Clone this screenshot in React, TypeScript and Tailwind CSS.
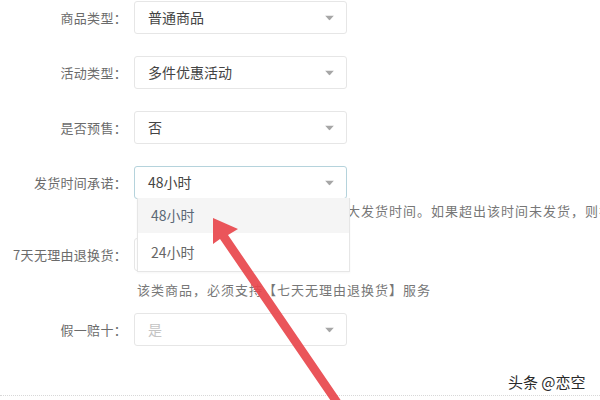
import React from 'react';

const Caret = () => (
  <svg width="9" height="5" viewBox="0 0 9 5" className="absolute right-[12px] top-1/2 -translate-y-1/2">
    <path d="M0 0 L9 0 L4.5 5 Z" fill="#a6a6a6" />
  </svg>
);

const Select: React.FC<{ value: string; focused?: boolean; muted?: boolean }> = ({ value, focused, muted }) => (
  <div
    className={`relative flex items-center w-[213px] h-[33px] pl-[13px] rounded-[3px] border bg-white text-[14px] ${
      focused ? 'border-[#b5d3dc]' : 'border-[#e6e6e6]'
    } ${muted ? 'text-[#c4c4c4]' : 'text-[#444]'}`}
  >
    {value}
    <Caret />
  </div>
);

const Row: React.FC<{ label: string; children: React.ReactNode; className?: string }> = ({ label, children, className }) => (
  <div className={`flex items-center ${className ?? ''}`}>
    <div className="w-[130px] pr-[3px] text-right text-[13px] tracking-[0.3px] text-[#6b6b6b] whitespace-nowrap">{label}</div>
    <div className="ml-[4px]">{children}</div>
  </div>
);

export default function App() {
  return (
    <div
      className="relative w-[600px] h-[400px] overflow-hidden bg-white"
      style={{ fontFamily: '"Noto Sans CJK SC", "Noto Sans", sans-serif' }}
    >
      <div className="pt-[1px]">
        <Row label="商品类型：">
          <Select value="普通商品" />
        </Row>
        <Row label="活动类型：" className="mt-[22px]">
          <Select value="多件优惠活动" />
        </Row>
        <Row label="是否预售：" className="mt-[22px]">
          <Select value="否" />
        </Row>
        <Row label="发货时间承诺：" className="mt-[22px]">
          <Select value="48小时" focused />
        </Row>
        {/* hint partly hidden by the open dropdown */}
        <div className="mt-[4px] ml-[137px] h-[16px] leading-[16px] text-[13px] text-[#777] whitespace-nowrap tracking-[1px]">
          此处选择的时间为卖家所承诺的最大发货时间。如果超出该时间未发货，则视为违约
        </div>
        <Row label="7天无理由退换货：" className="mt-[19px]">
          <Select value="是" />
        </Row>
        <div className="mt-[11px] ml-[137px] h-[16px] leading-[16px] text-[13px] text-[#777] whitespace-nowrap tracking-[1px]">
          该类商品，必须支持【七天无理由退换货】服务
        </div>
        <Row label="假一赔十：" className="mt-[15px]">
          <Select value="是" muted />
        </Row>
      </div>

      {/* open dropdown */}
      <div className="absolute left-[137px] top-[198px] w-[213px] border border-t-0 border-[#e6e6e6] bg-white text-[14px] shadow-[0_1px_2px_rgba(0,0,0,0.04)]">
        <div className="h-[35px] flex items-center pl-[13px] bg-[#f5f5f5] text-[#5b6876]">48小时</div>
        <div className="h-[38px] flex items-center pl-[13px] text-[#666]">24小时</div>
      </div>

      {/* dotted rule */}
      <div className="absolute left-0 right-0 top-[395px] border-t border-dotted border-[#d8d8d8]" />

      {/* red arrow */}
      <svg className="absolute left-0 top-0" width="600" height="400" viewBox="0 0 600 400">
        <polygon
          points="213,218 238,229 228,235 342,402 333,404 220,239 213,244"
          fill="#e8474c"
          opacity="0.92"
        />
      </svg>

      {/* watermark */}
      <div
        className="absolute left-[508px] top-[371px] text-[15px] text-[#2a2a2a] whitespace-nowrap"
        style={{ textShadow: '0 0 2px #fff, 0 0 2px #fff' }}
      >
        头条 @恋空
      </div>
    </div>
  );
}
